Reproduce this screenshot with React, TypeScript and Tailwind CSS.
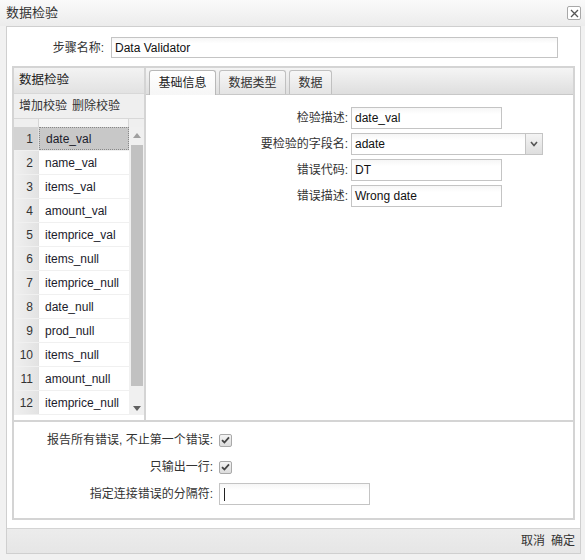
import React from 'react';

const rows = [
  'date_val',
  'name_val',
  'items_val',
  'amount_val',
  'itemprice_val',
  'items_null',
  'itemprice_null',
  'date_null',
  'prod_null',
  'items_null',
  'amount_null',
  'itemprice_null',
];

// Small checked checkbox
function Check() {
  return (
    <div className="w-[13px] h-[13px] rounded-[2px] border border-[#a9a9a9] bg-gradient-to-b from-[#f4f4f4] to-[#dcdcdc] flex items-center justify-center">
      <svg width="9" height="8" viewBox="0 0 9 8">
        <path d="M1 4.2 L3.4 6.5 L8 1.3" fill="none" stroke="#444" strokeWidth="1.8" />
      </svg>
    </div>
  );
}

function FormRow({ label, children }: { label: string; children: React.ReactNode }) {
  return (
    <div className="flex items-center h-[22px]">
      <span className="w-[205px] text-right pr-[3px]">{label}</span>
      {children}
    </div>
  );
}

function TextBox({ value, width }: { value: string; width: string }) {
  return (
    <div className={`${width} h-[22px] border border-[#c4c4c4] bg-gradient-to-b from-[#f6f6f6] to-white to-[30%] flex items-center pl-[3px] text-[#111]`}>
      {value}
    </div>
  );
}

export default function App() {
  return (
    <div className="w-[585px] h-[560px] bg-[#f1f1f1] flex flex-col text-[12px] text-[#333] font-['Liberation_Sans','Noto_Sans_CJK_SC',sans-serif]">
      {/* Title bar */}
      <div className="h-[26px] flex items-center justify-between pl-[6px] pr-[4px] bg-gradient-to-b from-[#fafafa] to-[#ececec]">
        <span className="text-[13px] text-[#333]">数据检验</span>
        <div className="w-[14px] h-[14px] border border-[#a8a8a8] rounded-[2px] bg-white flex items-center justify-center">
          <svg width="9" height="9" viewBox="0 0 9 9">
            <path d="M1 1 L8 8 M8 1 L1 8" stroke="#555" strokeWidth="1.3" />
          </svg>
        </div>
      </div>

      {/* Dialog frame */}
      <div className="ml-[6px] mr-[4px] mb-[6px] flex-1 flex flex-col border border-[#cfcfcf]">
        <div className="flex-1 bg-white px-[5px] pt-[10px] flex flex-col">
          {/* Step name */}
          <div className="flex items-center h-[21px]">
            <span className="w-[94px] text-right pr-[2px]">步骤名称:</span>
            <div className="ml-[5px] w-[447px] h-[21px] border border-[#c4c4c4] bg-gradient-to-b from-[#f6f6f6] to-white to-[30%] flex items-center pl-[3px] text-[#111]">
              Data Validator
            </div>
          </div>

          {/* Main box */}
          <div className="mt-[8px] h-[454px] border-2 border-[#d4d4d4] flex flex-col">
            <div className="h-[354px] border-b-2 border-[#d4d4d4] flex">
              {/* Left panel */}
              <div className="w-[132px] border-r-2 border-[#d4d4d4] flex flex-col">
                <div className="h-[26px] flex items-center pl-[5px] bg-gradient-to-b from-[#f3f3f3] to-[#e2e2e2] border-b border-[#d8d8d8] text-[12.5px] text-[#222]">
                  数据检验
                </div>
                <div className="h-[24px] flex items-center pl-[5px] gap-[5px] bg-[#efefef] text-[#333]">
                  <span>增加校验</span>
                  <span>删除校验</span>
                </div>
                <div className="h-[9px] flex border-t border-[#d8d8d8] bg-[#efefef]">
                  <div className="w-[25px] border-r border-[#d6d6d6]" />
                  <div className="w-[90px] border-r border-[#d6d6d6] bg-[#f5f5f5]" />
                  <div className="flex-1" />
                </div>
                <div className="flex h-[288px]">
                  <div className="w-[115px] flex flex-col">
                    {rows.map((name, i) => (
                      <div key={i} className="h-[24px] flex border-b border-[#f0f0f0]">
                        <div
                          className={`w-[25px] flex items-center justify-end pr-[5px] border-r border-[#e0e0e0] ${
                            i === 0 ? 'bg-[#d3d3d3]' : 'bg-gradient-to-r from-[#f0f0f0] to-[#e3e3e3]'
                          }`}
                        >
                          {i + 1}
                        </div>
                        <div
                          className={`flex-1 flex items-center pl-[6px] text-[#1b1b2b] ${
                            i === 0 ? 'bg-[#c8c8c8] border border-dotted border-[#888]' : 'bg-white'
                          }`}
                        >
                          {name}
                        </div>
                      </div>
                    ))}
                  </div>
                  {/* Scrollbar */}
                  <div className="flex-1 bg-[#f0f0f0] flex flex-col items-center">
                    <div className="h-[16px] flex items-center justify-center">
                      <svg width="8" height="5" viewBox="0 0 8 5">
                        <path d="M0 5 L4 0 L8 5 Z" fill="#a0a0a0" />
                      </svg>
                    </div>
                    <div className="w-[12px] h-[241px] mt-[2px] bg-[#c1c1c1]" />
                    <div className="flex-1 flex items-end pb-[4px]">
                      <svg width="8" height="5" viewBox="0 0 8 5">
                        <path d="M0 0 L4 5 L8 0 Z" fill="#606060" />
                      </svg>
                    </div>
                  </div>
                </div>
              </div>

              {/* Right panel */}
              <div className="flex-1 flex flex-col">
                <div className="h-[27px] flex items-end pl-[3px] gap-[3px] bg-gradient-to-b from-[#f5f5f5] to-[#dedede] border-b border-[#c8c8c8]">
                  <div className="w-[67px] h-[25px] -mb-px flex items-center justify-center border border-b-0 border-[#b8b8b8] rounded-t-[3px] bg-gradient-to-b from-white to-[#f6f6f6] text-[#222]">
                    基础信息
                  </div>
                  <div className="w-[67px] h-[24px] flex items-center justify-center border border-b-0 border-[#c0c0c0] rounded-t-[3px] bg-gradient-to-b from-[#f7f7f7] to-[#e4e4e4]">
                    数据类型
                  </div>
                  <div className="w-[43px] h-[24px] flex items-center justify-center border border-b-0 border-[#c0c0c0] rounded-t-[3px] bg-gradient-to-b from-[#f7f7f7] to-[#e4e4e4]">
                    数据
                  </div>
                </div>
                <div className="flex-1 bg-white pt-[12px] flex flex-col gap-[4px]">
                  <FormRow label="检验描述:">
                    <TextBox value="date_val" width="w-[151px]" />
                  </FormRow>
                  <FormRow label="要检验的字段名:">
                    <div className="w-[192px] h-[22px] border border-[#c4c4c4] flex text-[#111]">
                      <div className="flex-1 flex items-center pl-[3px] bg-gradient-to-b from-[#f6f6f6] to-white to-[30%]">
                        adate
                      </div>
                      <div className="w-[17px] border-l border-[#c4c4c4] bg-gradient-to-b from-[#f4f4f4] to-[#dedede] flex items-center justify-center">
                        <svg width="8" height="6" viewBox="0 0 8 6">
                          <path d="M1 1 L4 4.5 L7 1" fill="none" stroke="#555" strokeWidth="1.6" />
                        </svg>
                      </div>
                    </div>
                  </FormRow>
                  <FormRow label="错误代码:">
                    <TextBox value="DT" width="w-[151px]" />
                  </FormRow>
                  <FormRow label="错误描述:">
                    <TextBox value="Wrong date" width="w-[151px]" />
                  </FormRow>
                </div>
              </div>
            </div>

            {/* Options */}
            <div className="flex-1 bg-white pt-[7px] flex flex-col gap-[5px]">
              <div className="flex items-center h-[22px]">
                <span className="w-[199px] text-right">报告所有错误, 不止第一个错误:</span>
                <div className="ml-[6px]"><Check /></div>
              </div>
              <div className="flex items-center h-[22px]">
                <span className="w-[199px] text-right">只输出一行:</span>
                <div className="ml-[6px]"><Check /></div>
              </div>
              <div className="flex items-center h-[22px]">
                <span className="w-[199px] text-right">指定连接错误的分隔符:</span>
                <div className="ml-[6px] w-[151px] h-[22px] border border-[#c4c4c4] bg-gradient-to-b from-[#f6f6f6] to-white to-[30%] flex items-center pl-[4px]">
                  <div className="w-px h-[13px] bg-[#222]" />
                </div>
              </div>
            </div>
          </div>
        </div>

        {/* Footer */}
        <div className="h-[25px] border-t border-[#d4d4d4] bg-gradient-to-b from-[#ececec] to-[#e6e6e6] flex items-center justify-end pr-[5px] gap-[6px] text-[#333]">
          <span>取消</span>
          <span>确定</span>
        </div>
      </div>
    </div>
  );
}
